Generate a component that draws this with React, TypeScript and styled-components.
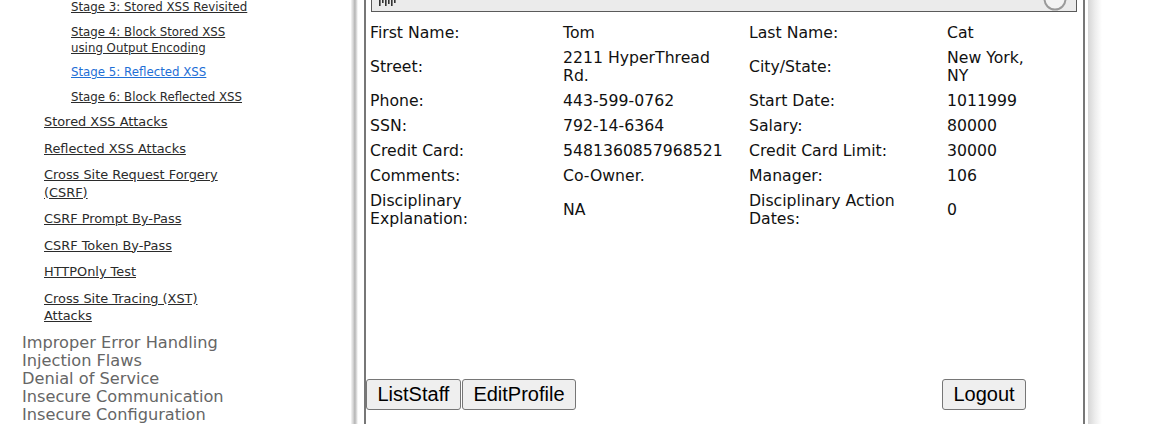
import React from "react";
import styled, { createGlobalStyle } from "styled-components";

const GlobalStyle = createGlobalStyle`
  html, body {
    margin: 0;
    padding: 0;
    background: #fff;
    overflow: hidden;
  }
`;

const Page = styled.div`
  display: flex;
  width: 1160px;
  height: 424px;
  overflow: hidden;
  background: #fff;
`;

const Sidebar = styled.nav`
  width: 351px;
  flex: none;
  font-family: "DejaVu Sans", Verdana, sans-serif;
`;

const MenuList = styled.ul<{ $indent: number; $top?: number }>`
  list-style: none;
  margin: ${({ $top }) => $top ?? 0}px 0 0;
  padding: 0 0 0 ${({ $indent }) => $indent}px;
`;

const StageItem = styled.li`
  width: 185px;
  margin-bottom: 8.5px;
  font-size: 11.8px;
  line-height: 16px;
  white-space: pre-line;
`;

const TopicItem = styled.li`
  width: 205px;
  margin-bottom: 9px;
  font-size: 12.9px;
  line-height: 17.5px;
  white-space: pre-line;
`;

const MenuLink = styled.a<{ $active?: boolean }>`
  color: ${({ $active }) => ($active ? "#1f6fd6" : "#2b2b2b")};
  text-decoration: underline;
  cursor: pointer;
`;

const CategoryItem = styled.li`
  font-size: 16.2px;
  line-height: 18px;
  color: #666;
  white-space: nowrap;
`;

const SideShadow = styled.div`
  width: 7px;
  flex: none;
  background: linear-gradient(
    to right,
    #f6f6f6 0%,
    #cfcfcf 35%,
    #b4b4b4 55%,
    #dcdcdc 80%,
    #ffffff 100%
  );
`;

const Main = styled.main`
  display: flex;
  flex: none;
  padding-left: 6px;
`;

const Frame = styled.section`
  width: 717px;
  height: 424px;
  border-left: 2px solid #777;
  border-right: 2px solid #777;
  display: flex;
  flex-direction: column;
`;

const TopBar = styled.div`
  height: 11px;
  margin: 0 6px 0 5px;
  background: #ebebeb;
  border: 1px solid #5a5a5a;
  border-top: none;
  display: flex;
  justify-content: space-between;
  align-items: flex-start;
  overflow: hidden;
`;

const InfoArea = styled.div`
  height: 367px;
  padding-top: 8.5px;
  box-sizing: border-box;
`;

const ProfileGrid = styled.div`
  display: grid;
  grid-template-columns: 193px 186px 198px 1fr;
  align-items: center;
  font-family: "DejaVu Sans", Verdana, sans-serif;
  font-size: 15.7px;
  line-height: 18px;
  color: #111;
`;

const Cell = styled.div`
  padding: 3.5px 4px;
  white-space: pre-line;
`;

const ButtonRow = styled.div`
  display: grid;
  grid-template-columns: 192px 186px 198px 1fr;
`;

const ButtonGroup = styled.div<{ $span?: number }>`
  grid-column: span ${({ $span }) => $span ?? 1};
  display: flex;
  gap: 1px;
`;

const FormButton = styled.button`
  font-family: "Liberation Sans", Arial, sans-serif;
  font-size: 20px;
  line-height: 23px;
  padding: 3px 10.5px;
  color: #000;
  background: #efefef;
  border: 1px solid #767676;
  border-radius: 3px;
  cursor: pointer;
`;

const RightShadow = styled.div`
  width: 14px;
  margin-left: 3px;
  background: linear-gradient(to right, #d6d6d6, #ededed 50%, #fff);
`;

const stages = [
  { label: "Stage 3: Stored XSS Revisited" },
  { label: "Stage 4: Block Stored XSS\nusing Output Encoding" },
  { label: "Stage 5: Reflected XSS", active: true },
  { label: "Stage 6: Block Reflected XSS" },
];

const topics = [
  "Stored XSS Attacks",
  "Reflected XSS Attacks",
  "Cross Site Request Forgery\n(CSRF)",
  "CSRF Prompt By-Pass",
  "CSRF Token By-Pass",
  "HTTPOnly Test",
  "Cross Site Tracing (XST)\nAttacks",
];

const categories = [
  "Improper Error Handling",
  "Injection Flaws",
  "Denial of Service",
  "Insecure Communication",
  "Insecure Configuration",
];

const profile: [string, string, string, string][] = [
  ["First Name:", "Tom", "Last Name:", "Cat"],
  ["Street:", "2211 HyperThread\nRd.", "City/State:", "New York,\nNY"],
  ["Phone:", "443-599-0762", "Start Date:", "1011999"],
  ["SSN:", "792-14-6364", "Salary:", "80000"],
  ["Credit Card:", "5481360857968521", "Credit Card Limit:", "30000"],
  ["Comments:", "Co-Owner.", "Manager:", "106"],
  ["Disciplinary\nExplanation:", "NA", "Disciplinary Action\nDates:", "0"],
];

const BarMark = () => (
  <svg width="22" height="8" viewBox="0 0 22 8" style={{ marginLeft: 6 }}>
    <rect x="1" y="0" width="1.6" height="6" fill="#333" />
    <rect x="4" y="0" width="1.6" height="3" fill="#333" />
    <rect x="7" y="0" width="1.6" height="6" fill="#333" />
    <rect x="10" y="0" width="1.6" height="4" fill="#333" />
    <rect x="13" y="0" width="1.6" height="6" fill="#333" />
    <rect x="16" y="0" width="1.6" height="3" fill="#333" />
  </svg>
);

const RoundKnob = () => (
  <svg width="26" height="11" viewBox="0 0 26 11" style={{ marginRight: 8 }}>
    <circle cx="13" cy="-1" r="10.5" fill="#f3f3f3" stroke="#9a9a9a" strokeWidth="2" />
  </svg>
);

export default function App() {
  return (
    <Page>
      <GlobalStyle />
      <Sidebar>
        <MenuList $indent={71} $top={-1}>
          {stages.map((s) => (
            <StageItem key={s.label}>
              <MenuLink $active={s.active}>{s.label}</MenuLink>
            </StageItem>
          ))}
        </MenuList>
        <MenuList $indent={44} $top={5.5}>
          {topics.map((t) => (
            <TopicItem key={t}>
              <MenuLink>{t}</MenuLink>
            </TopicItem>
          ))}
        </MenuList>
        <MenuList $indent={22} $top={0.5}>
          {categories.map((c) => (
            <CategoryItem key={c}>{c}</CategoryItem>
          ))}
        </MenuList>
      </Sidebar>
      <SideShadow />
      <Main>
        <Frame>
          <TopBar>
            <BarMark />
            <RoundKnob />
          </TopBar>
          <InfoArea>
            <ProfileGrid>
              {profile.map((row) =>
                row.map((text, i) => <Cell key={`${row[0]}-${i}`}>{text}</Cell>)
              )}
            </ProfileGrid>
          </InfoArea>
          <ButtonRow>
            <ButtonGroup $span={3}>
              <FormButton>ListStaff</FormButton>
              <FormButton>EditProfile</FormButton>
            </ButtonGroup>
            <ButtonGroup>
              <FormButton>Logout</FormButton>
            </ButtonGroup>
          </ButtonRow>
        </Frame>
        <RightShadow />
      </Main>
    </Page>
  );
}
